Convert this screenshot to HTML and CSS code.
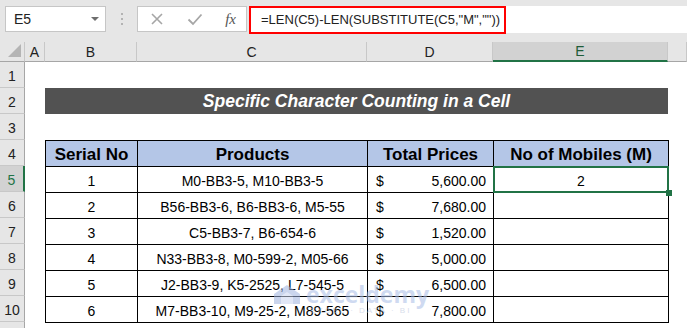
FILE: index.html
```html
<!DOCTYPE html>
<html lang="en">
<head>
  <meta charset="UTF-8" />
  <title>Specific Character Counting in a Cell</title>
  <link rel="stylesheet" href="styles.css">
</head>
<body>

<!-- Formula bar -->
<div class="toolbar">
  <div class="namebox">
    <span>E5</span>
    <span class="caret"></span>
  </div>
  <div class="grip"><i></i><i></i><i></i></div>
  <div class="fx-buttons">
    <svg width="14" height="14" viewBox="0 0 14 14"><path d="M2 2 L12 12 M12 2 L2 12" stroke="#a6a6a6" stroke-width="1.6" fill="none"/></svg>
    <svg width="16" height="14" viewBox="0 0 16 14"><path d="M1.5 7.5 L6 12 L14.5 2.5" stroke="#a6a6a6" stroke-width="1.8" fill="none"/></svg>
    <span class="fx">fx</span>
  </div>
  <div class="formula">
    <div class="formula-text">=LEN(C5)-LEN(SUBSTITUTE(C5,"M",""))</div>
  </div>
</div>

<!-- Sheet -->
<div class="sheet">
  <div class="corner"><span></span></div>
  <div class="col-head">A</div>
  <div class="col-head">B</div>
  <div class="col-head">C</div>
  <div class="col-head">D</div>
  <div class="col-head active">E</div>
  <div class="col-head"></div>

  <div class="row-head">1</div>
  <div class="row-head">2</div>
  <div class="row-head">3</div>
  <div class="row-head">4</div>
  <div class="row-head active">5</div>
  <div class="row-head">6</div>
  <div class="row-head">7</div>
  <div class="row-head">8</div>
  <div class="row-head">9</div>
  <div class="row-head">10</div>
  <div class="row-head"></div>

  <div class="title">Specific Character Counting in a Cell</div>

  <div class="data">
    <div class="cell head">Serial No</div>
    <div class="cell head">Products</div>
    <div class="cell head">Total Prices</div>
    <div class="cell head">No of Mobiles (M)</div>

    <div class="cell">1</div>
    <div class="cell">M0-BB3-5, M10-BB3-5</div>
    <div class="cell price"><span>$</span><span>5,600.00</span></div>
    <div class="cell sel">2</div>

    <div class="cell">2</div>
    <div class="cell">B56-BB3-6, B6-BB3-6, M5-55</div>
    <div class="cell price"><span>$</span><span>7,680.00</span></div>
    <div class="cell"></div>

    <div class="cell">3</div>
    <div class="cell">C5-BB3-7, B6-654-6</div>
    <div class="cell price"><span>$</span><span>1,520.00</span></div>
    <div class="cell"></div>

    <div class="cell">4</div>
    <div class="cell">N33-BB3-8, M0-599-2, M05-66</div>
    <div class="cell price"><span>$</span><span>5,000.00</span></div>
    <div class="cell"></div>

    <div class="cell">5</div>
    <div class="cell">J2-BB3-9, K5-2525, L7-545-5</div>
    <div class="cell price"><span>$</span><span>6,500.00</span></div>
    <div class="cell"></div>

    <div class="cell">6</div>
    <div class="cell">M7-BB3-10, M9-25-2, M89-565</div>
    <div class="cell price"><span>$</span><span>7,800.00</span></div>
    <div class="cell"></div>
  </div>

  <!-- watermark -->
  <div class="watermark">
    <svg width="30" height="24" viewBox="0 0 30 24">
      <path d="M2 12 L15 3 L28 12 L28 22 L2 22 Z" fill="#9fb3e0"/>
      <path d="M9 22 L9 14 L15 10 L21 14 L21 22 Z" fill="#c9d5ef"/>
    </svg>
    <div class="wm-text">
      <div class="wm-name">exceldemy</div>
      <div class="wm-sub">EXCEL · DATA · BI</div>
    </div>
  </div>
</div>

</body>
</html>
```

FILE: styles.css
```css
html, body {
  margin: 0; padding: 0;
  overflow: hidden;
  background: #fff;
  font-family: "Liberation Sans", Arial, sans-serif;
  color: #000;
}

/* Formula bar */
.toolbar {
  height: 42px;
  background: #e6e6e6;
  display: flex;
  align-items: flex-start;
  padding: 6px 0 0 5px;
  box-sizing: border-box;
}

.namebox {
  width: 101px; height: 26px;
  box-sizing: border-box;
  background: #fff;
  border: 1px solid #c6c6c6;
  display: flex;
  align-items: center;
  justify-content: space-between;
  padding: 0 6px 0 8px;
  font-size: 14px;
  color: #222;
}

.caret {
  width: 0; height: 0;
  border-left: 4px solid transparent;
  border-right: 4px solid transparent;
  border-top: 4px solid #6e6e6e;
}

.grip {
  width: 31px;
  height: 26px;
  display: flex;
  flex-direction: column;
  align-items: center;
  justify-content: center;
  gap: 3px;
}
.grip i { width: 2px; height: 2px; background: #b3b3b3; }

.fx-buttons {
  width: 110px; height: 26px;
  box-sizing: border-box;
  background: #fff;
  border: 1px solid #c6c6c6;
  display: flex;
  align-items: center;
  justify-content: space-between;
  padding: 0 10px 0 12px;
}

.fx {
  font-family: "Liberation Serif", serif;
  font-style: italic;
  font-size: 15px;
  color: #555;
}

.formula {
  flex: 1;
  height: 27px;
  margin-left: 2px;
  background: #fff;
}

.formula-text {
  display: inline-block;
  height: 28px;
  width: 257px;
  box-sizing: border-box;
  border: 2px solid #ff0000;
  padding: 0 0 0 10px;
  line-height: 24px;
  font-size: 13px;
  color: #222;
}

/* Sheet */
.sheet {
  position: relative;
  display: grid;
  grid-template-columns: 25px 20px 92px 230px 126px 175px 1fr;
  grid-template-rows: 20px repeat(11, 26px);
  font-size: 14px;
}

.corner {
  background: #e6e6e6;
  border-right: 1px solid #c8c8c8;
  border-bottom: 1px solid #a6a6a6;
  box-sizing: border-box;
  display: flex;
  align-items: flex-end;
  justify-content: flex-end;
  padding: 0 3px 4px 0;
}
.corner span {
  width: 0; height: 0;
  border-left: 13px solid transparent;
  border-bottom: 13px solid #b4b4b4;
}

.col-head {
  background: #e6e6e6;
  border-right: 1px solid #c8c8c8;
  border-bottom: 1px solid #a6a6a6;
  box-sizing: border-box;
  display: flex;
  align-items: center;
  justify-content: center;
  color: #222;
}
.col-head.active {
  background: #d2d2d2;
  border-bottom: 2px solid #217346;
  color: #1e5c38;
}

.row-head {
  grid-column: 1;
  background: #e6e6e6;
  border-right: 1px solid #a6a6a6;
  border-bottom: 1px solid #c8c8c8;
  box-sizing: border-box;
  display: flex;
  align-items: center;
  justify-content: center;
  padding-top: 3px;
  color: #222;
}
.row-head.active {
  background: #d2d2d2;
  border-right: 2px solid #217346;
  color: #217346;
}

.title {
  grid-column: 3 / 7;
  grid-row: 3;
  background: #525252;
  color: #fff;
  font-weight: bold;
  font-style: italic;
  font-size: 17.5px;
  display: flex;
  align-items: center;
  justify-content: center;
  padding-top: 1px;
}

.data {
  grid-column: 3 / 7;
  grid-row: 5 / span 7;
  align-self: start;
  display: grid;
  grid-template-columns: 91px 229px 125px 174px;
  grid-auto-rows: 25px;
  gap: 1px;
  padding: 1px;
  background: #000;
  width: max-content;
}

.cell {
  background: #fff;
  display: flex;
  align-items: center;
  justify-content: center;
  padding-top: 2px;
  box-sizing: border-box;
}
.cell.head {
  background: #b4c6e7;
  font-weight: bold;
  font-size: 17px;
}
.cell.price {
  justify-content: space-between;
  padding: 2px 7px 0 8px;
}

.cell.sel { position: relative; }
.cell.sel::after {
  content: "";
  position: absolute;
  top: -1px; left: -1px; right: -1px; bottom: -1px;
  border: 2px solid #217346;
}
.cell.sel::before {
  content: "";
  position: absolute;
  right: -4px; bottom: -4px;
  width: 6px; height: 6px;
  background: #217346;
  z-index: 1;
}

.watermark {
  position: absolute;
  left: 272px;
  top: 240px;
  display: flex;
  align-items: flex-start;
  gap: 4px;
  opacity: 0.55;
  pointer-events: none;
}
.wm-name {
  font-family: "Open Sans", sans-serif;
  font-weight: bold;
  font-size: 23px;
  line-height: 24px;
  color: #a9bde6;
}
.wm-sub {
  font-size: 8px;
  letter-spacing: 2px;
  color: #b8c4dc;
  padding-left: 4px;
}
```
